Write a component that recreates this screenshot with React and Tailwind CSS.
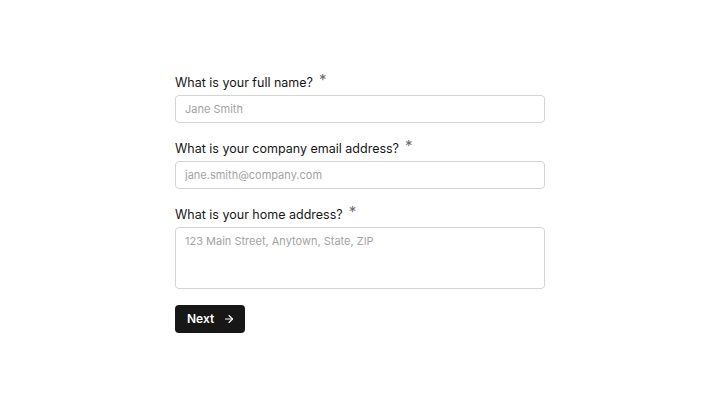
import React from 'react';
import { ArrowRight } from 'lucide-react';

function Field({ label, placeholder, multiline }) {
  return (
    <div className="flex flex-col">
      <label className="flex items-start h-5 mb-[3px] text-[12.5px] font-normal leading-5 text-[#161616]">
        <span className="pt-[1px]">{label}</span>
        <span className="ml-[6px] text-[15px] leading-4 font-normal text-[#6b6b6b]">*</span>
      </label>
      {multiline ? (
        <textarea
          placeholder={placeholder}
          className="w-full h-[62px] resize-none rounded-[4px] border border-[#d4d4d4] bg-white px-[9px] py-[3px] text-[11px] leading-5 text-[#1c1c1c] placeholder-[#a3a3a3] outline-none"
        />
      ) : (
        <input
          type="text"
          placeholder={placeholder}
          className="w-full h-[28px] rounded-[4px] border border-[#d4d4d4] bg-white px-[9px] text-[11px] text-[#1c1c1c] placeholder-[#a3a3a3] outline-none"
        />
      )}
    </div>
  );
}

export default function App() {
  return (
    <div
      className="min-h-screen bg-white flex items-center justify-center"
      style={{ fontFamily: 'Inter, "Noto Sans", sans-serif' }}
    >
      <div className="w-[370px] flex flex-col gap-[15px]">
        <Field label="What is your full name?" placeholder="Jane Smith" />
        <Field label="What is your company email address?" placeholder="jane.smith@company.com" />
        <Field label="What is your home address?" placeholder="123 Main Street, Anytown, State, ZIP" multiline />
        <div className="pt-[1px]">
          <button className="flex items-center h-[28px] w-[70px] rounded-[4px] bg-[#171717] pl-[12px] text-[12px] font-semibold text-white">
            <span>Next</span>
            <ArrowRight className="ml-[9px] w-[12px] h-[12px]" strokeWidth={2.2} />
          </button>
        </div>
      </div>
    </div>
  );
}
